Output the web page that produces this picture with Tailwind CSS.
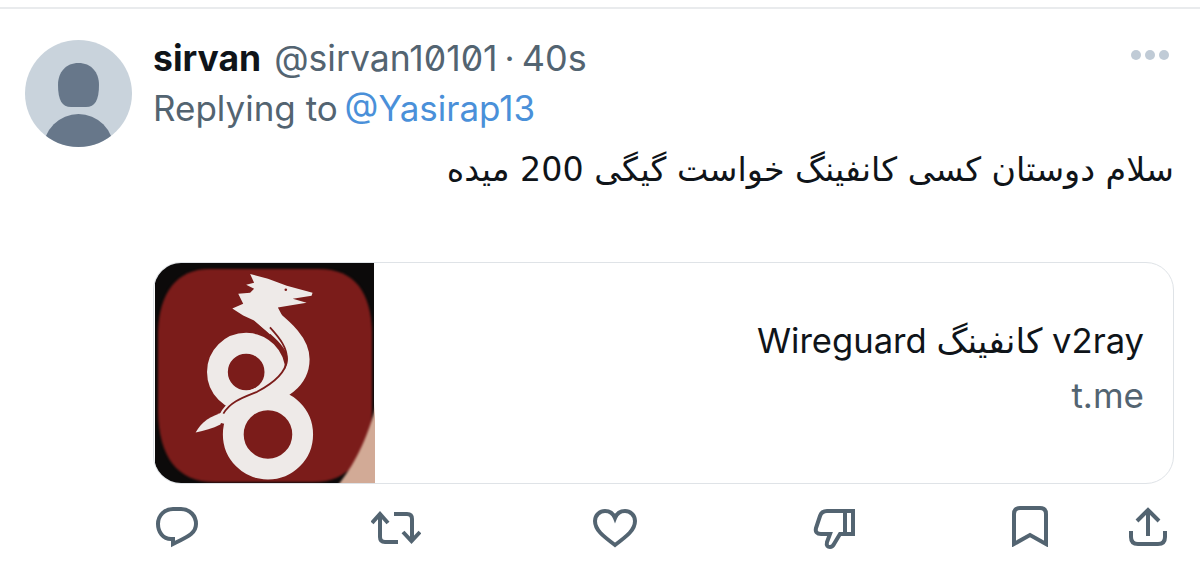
<!doctype html>
<html lang="en">
<head>
<meta charset="utf-8">
<script src="https://cdn.jsdelivr.net/npm/@tailwindcss/browser@4"></script>
</head>
<body class="bg-white">
<div class="w-[1200px] h-[575px] overflow-hidden bg-white font-['Inter','DejaVu_Sans',sans-serif]">
  <div class="h-[9px] border-b-2 border-[#e9ebed]"></div>
  <div class="flex pl-[25px] pt-[31px]">
    <svg class="w-[107px] h-[107px] shrink-0" viewBox="0 0 107 107">
      <defs><clipPath id="av"><circle cx="53.5" cy="53.5" r="53.5"/></clipPath></defs>
      <circle cx="53.5" cy="53.5" r="53.5" fill="#c9d3dc"/>
      <g clip-path="url(#av)" fill="#67778a">
        <path d="M53.5 23C41 23 33 32 33 45C33 60 37 67 46 67H61C70 67 74 60 74 45C74 32 66 23 53.5 23Z"/>
        <ellipse cx="53.5" cy="109" rx="35" ry="35"/>
      </g>
    </svg>
    <div class="ml-[21px] w-[1021px]">
      <div class="flex items-start justify-between h-[40px]">
        <div class="flex items-baseline text-[35px] leading-[38px] mt-[-1px] text-[#536471]">
          <span class="font-bold text-[#0f1419] text-[35.5px]">sirvan</span>
          <span class="ml-[13px] text-[35.6px] [font-feature-settings:'zero']">@sirvan10101</span>
          <span class="mx-[7px]">·</span>
          <span class="text-[36px]">40s</span>
        </div>
        <div class="flex gap-[4px] mt-[10px] mr-[5px]">
          <span class="w-[10px] h-[10px] rounded-full bg-[#c0cbd6]"></span>
          <span class="w-[10px] h-[10px] rounded-full bg-[#c0cbd6]"></span>
          <span class="w-[10px] h-[10px] rounded-full bg-[#c0cbd6]"></span>
        </div>
      </div>
      <div class="text-[35px] leading-[38px] mt-[9px] text-[#536471]">Replying to <span class="text-[#4a90d9] ml-[-3px]">@Yasirap13</span></div>
      <div dir="rtl" class="mt-[23px] text-[33.3px] leading-[40px] text-[#0f1419] font-['DejaVu_Sans',sans-serif] mr-0">سلام دوستان کسی کانفینگ خواست گیگی 200 میده</div>
      <div class="mt-[72px] h-[222px] w-[1021px] rounded-[28px] border border-[#dfe3e7] flex overflow-hidden">
        <svg class="w-[221px] h-full shrink-0" viewBox="0 0 221 222">
          <rect width="221" height="222" fill="#0c0a0a"/>
          <g filter="blur(1px)">
            <path d="M55 6H165C202 6 218 30 219 70V150C218 195 195 221 160 221H60C22 221 4 195 3 150V70C4 30 22 6 55 6Z" fill="#7b1c1a"/>
            <path d="M224 140C214 180 200 205 184 225H224Z" fill="#d2aa96"/>
          </g>
          <g filter="blur(0.8px)">
            <circle cx="92" cy="110" r="29" fill="none" stroke="#eeeae8" stroke-width="21"/>
            <circle cx="114" cy="173" r="35" fill="none" stroke="#eeeae8" stroke-width="21"/>
            <path d="M41 171C47 160 56 154 71 150L66 163C58 167 50 169 41 171Z" fill="#eeeae8"/>
            <path d="M106 48C118 60 145 76 145 97C145 118 126 128 104 137C88 143 76 150 73 163" fill="none" stroke="#eeeae8" stroke-width="22"/>
            <path d="M96 11L114 16L133 23L159 30L158 33L139 36L153 40L136 43L124 45L132 60L116 72L100 58L89 53L78 46L89 41L84 31L96 30L100 26L92 22L100 20Z" fill="#eeeae8"/>
            <path d="M116 65C126 76 134 86 133 98C132 112 118 122 103 130C88 136 76 140 69 152" fill="none" stroke="#7b1c1a" stroke-width="1.800"/>
            <circle cx="132" cy="27" r="1.300" fill="#7b1c1a"/>
          </g>
        </svg>
        <div class="flex-1 pr-[29px] pt-[57px] text-right">
          <div class="text-[34.6px] leading-[40px] text-[#0f1419]" dir="ltr">Wireguard کانفینگ v2ray</div>
          <div class="text-[35px] leading-[40px] mt-[15px] text-[#536471]">t.me</div>
        </div>
      </div>
      <div class="flex items-start mt-[23px] ml-[3px] text-[#536471]">
        <svg class="w-[42px] h-[41px]" viewBox="0 0 42 41" fill="none" stroke="currentColor" stroke-width="4"><path d="M17 37V32H15C7 32 2 25 2 17C2 8 9 2 17 2H25C34 2 40 9 40 17C40 26 33 29 17 37Z"/></svg>
        <svg class="w-[50px] h-[34px] ml-[173px] mt-[4px]" viewBox="0 0 50 34" fill="none" stroke="currentColor" stroke-width="4"><path d="M1 12L9 3L17 12M9 4V26Q9 31 14 31H27M23 3H36Q41 3 41 8V30M32 21L40.500 30L49 21"/></svg>
        <svg class="w-[44px] h-[39px] ml-[172px] mt-[2px]" viewBox="0 0 44 39" fill="none" stroke="currentColor" stroke-width="4"><path d="M22 36C10 27 2 21 2 12C2 6 7 2 12 2C16 2 20 4 22 9C24 4 28 2 32 2C37 2 42 6 42 12C42 21 34 27 22 36Z"/></svg>
        <svg class="w-[42px] h-[40px] ml-[176px] mt-[2px]" viewBox="0 0 42 40" fill="none" stroke="currentColor" stroke-width="4"><path d="M40 2H14C10 2 8 4 7 7L3 19C2 23 4 25 8 25H17L14 33C13 37 15 38 17 38C19 38 20 37 21 35L27 25H40ZM32 2V25"/></svg>
        <svg class="w-[36px] h-[41px] ml-[157px] mt-[-1px]" viewBox="0 0 36 41" fill="none" stroke="currentColor" stroke-width="4"><path d="M2 38V8Q2 2 8 2H28Q34 2 34 8V38L18 29Z"/></svg>
        <svg class="w-[38px] h-[39px] ml-[81px]" viewBox="0 0 38 39" fill="none" stroke="currentColor" stroke-width="4"><path d="M19 29V4M8 14L19 3L30 14M2 24V30Q2 37 9 37H29Q36 37 36 30V24"/></svg>
      </div>
    </div>
  </div>
</div>
</body>
</html>
